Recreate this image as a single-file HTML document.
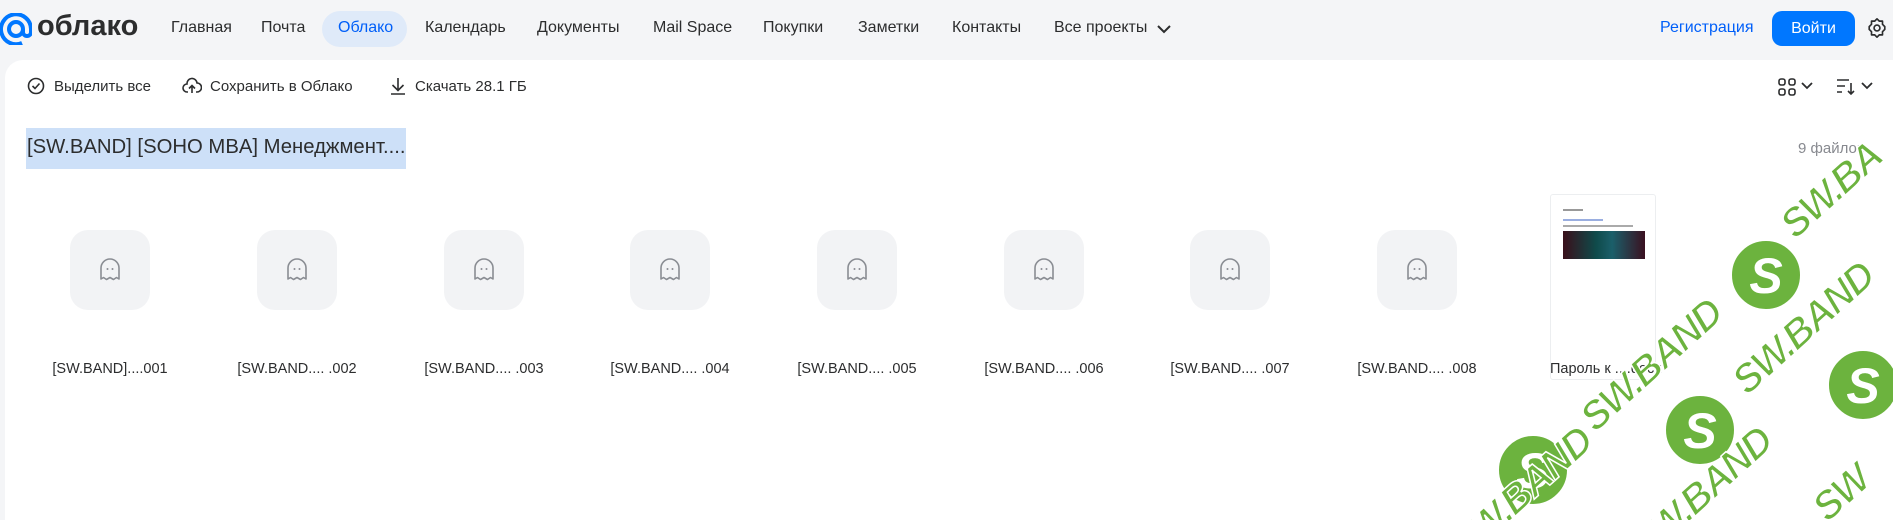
<!DOCTYPE html>
<html style="overflow:hidden;background:#fff"><head><meta charset="utf-8"><style>
*{margin:0;padding:0;box-sizing:border-box}
html,body{width:1893px;height:520px}
body{overflow:hidden;background:#f4f5f7;font-family:"Liberation Sans",Arial,sans-serif;color:#2c2d2e;position:relative}
.a{position:absolute;white-space:nowrap}
.nav{font-size:16px;top:19px;color:#2c2d2e}
.panel{position:absolute;left:5px;top:60px;width:1888px;height:460px;background:#fff;border-radius:18px 0 0 0}
.tb{font-size:15px;top:78px}
.tile{position:absolute;top:230px;width:80px;height:80px;background:#f2f3f5;border-radius:18px}
.tile svg{position:absolute;left:29px;top:28px}
.lbl{position:absolute;top:361px;font-size:14.5px;width:186px;text-align:center;color:#2c2d2e}
</style></head><body>
<svg class="a" style="left:0;top:13px" width="32" height="32" viewBox="0 0 32 32"><circle cx="16" cy="16" r="7" fill="none" stroke="#0077ff" stroke-width="4"/><path d="M23 16v3a4 4 0 0 0 8 0v-3A15 15 0 1 0 22 30" fill="none" stroke="#0077ff" stroke-width="4"/></svg>
<div class="a" style="left:37px;top:10px;font-size:29px;font-weight:bold;color:#2c2d2e">облако</div>
<div class="a" style="left:322px;top:11px;width:85px;height:36px;border-radius:18px;background:#dfeaf9"></div>
<div class="a nav" style="left:171px">Главная</div>
<div class="a nav" style="left:261px">Почта</div>
<div class="a nav" style="left:338px;color:#005ff9">Облако</div>
<div class="a nav" style="left:425px">Календарь</div>
<div class="a nav" style="left:537px">Документы</div>
<div class="a nav" style="left:653px">Mail Space</div>
<div class="a nav" style="left:763px">Покупки</div>
<div class="a nav" style="left:858px">Заметки</div>
<div class="a nav" style="left:952px">Контакты</div>
<div class="a nav" style="left:1054px">Все проекты</div>
<svg class="a" style="left:1156px;top:23px" width="16" height="12"><path d="M2 3l6 6 6-6" fill="none" stroke="#2c2d2e" stroke-width="2"/></svg>
<div class="a nav" style="left:1660px;color:#005ff9">Регистрация</div>
<div class="a" style="left:1772px;top:11px;width:83px;height:35px;border-radius:10px;background:#0077ff;color:#fff;font-size:16px;text-align:center;line-height:35px">Войти</div>
<svg class="a" style="left:1866px;top:17px" width="22" height="22" viewBox="0 0 24 24"><path d="M12 2l2.5 2.5h3.5v3.5L20.5 10.5 20.5 13.5 18 16v3.5h-3.5L12 22 9.5 19.5H6V16L3.5 13.5v-3L6 8V4.5h3.5z" fill="none" stroke="#2c2d2e" stroke-width="1.8" stroke-linejoin="round"/><circle cx="12" cy="12" r="3.2" fill="none" stroke="#2c2d2e" stroke-width="1.8"/></svg>
<div class="panel"></div>
<svg class="a" style="left:27px;top:77px" width="18" height="18"><circle cx="9" cy="9" r="7.5" fill="none" stroke="#2c2d2e" stroke-width="1.6"/><path d="M5.5 9l2.5 2.5 4.5-5" fill="none" stroke="#2c2d2e" stroke-width="1.6"/></svg>
<div class="a tb" style="left:54px">Выделить все</div>
<svg class="a" style="left:182px;top:76px" width="20" height="20" viewBox="0 0 20 20"><path d="M6 16H5a4 4 0 0 1 0-8 5 5 0 0 1 10-1 4 4 0 0 1 0 9h-1M10 17V10M7 12.5l3-3 3 3" fill="none" stroke="#2c2d2e" stroke-width="1.6"/></svg>
<div class="a tb" style="left:210px">Сохранить в Облако</div>
<svg class="a" style="left:389px;top:76px" width="18" height="20"><path d="M9 2v12M3.5 9l5.5 5.5 5.5-5.5M2 18h14" fill="none" stroke="#2c2d2e" stroke-width="1.6"/></svg>
<div class="a tb" style="left:415px">Скачать 28.1 ГБ</div>
<svg class="a" style="left:1778px;top:78px" width="18" height="18"><g fill="none" stroke="#2c2d2e" stroke-width="1.6"><rect x="1" y="1" width="6" height="6" rx="2"/><rect x="11" y="1" width="6" height="6" rx="2"/><rect x="1" y="11" width="6" height="6" rx="2"/><rect x="11" y="11" width="6" height="6" rx="2"/></g></svg>
<svg class="a" style="left:1800px;top:81px" width="14" height="10"><path d="M2 2l5 5 5-5" fill="none" stroke="#2c2d2e" stroke-width="1.8"/></svg>
<svg class="a" style="left:1836px;top:78px" width="20" height="18"><path d="M1 2h12M1 8h8M1 14h5M15 5v11M12 13l3 3 3-3" fill="none" stroke="#2c2d2e" stroke-width="1.6"/></svg>
<svg class="a" style="left:1860px;top:81px" width="14" height="10"><path d="M2 2l5 5 5-5" fill="none" stroke="#2c2d2e" stroke-width="1.8"/></svg>
<div class="a" style="left:26px;top:128px;width:380px;height:41px;background:#cde0f8"></div>
<div class="a" style="left:27px;top:136px;font-size:20.3px;color:#2c2d2e">[SW.BAND] [SOHO MBA] Менеджмент....</div>
<div class="a" style="left:1798px;top:140px;font-size:15px;color:#87898f">9 файлов</div>

<div class="tile" style="left:70px"><svg width="22" height="24" viewBox="0 0 22 24"><path d="M2 21V10a9 9 0 0 1 18 0v11l-2.5-1.5-3 2-3.5-2-3.5 2-3-2z" fill="none" stroke="#8a8d93" stroke-width="1.6" stroke-linejoin="round"/><circle cx="8.5" cy="11" r="1" fill="#8a8d93"/><circle cx="13.5" cy="11" r="1" fill="#8a8d93"/></svg></div>
<div class="tile" style="left:257px"><svg width="22" height="24" viewBox="0 0 22 24"><path d="M2 21V10a9 9 0 0 1 18 0v11l-2.5-1.5-3 2-3.5-2-3.5 2-3-2z" fill="none" stroke="#8a8d93" stroke-width="1.6" stroke-linejoin="round"/><circle cx="8.5" cy="11" r="1" fill="#8a8d93"/><circle cx="13.5" cy="11" r="1" fill="#8a8d93"/></svg></div>
<div class="tile" style="left:444px"><svg width="22" height="24" viewBox="0 0 22 24"><path d="M2 21V10a9 9 0 0 1 18 0v11l-2.5-1.5-3 2-3.5-2-3.5 2-3-2z" fill="none" stroke="#8a8d93" stroke-width="1.6" stroke-linejoin="round"/><circle cx="8.5" cy="11" r="1" fill="#8a8d93"/><circle cx="13.5" cy="11" r="1" fill="#8a8d93"/></svg></div>
<div class="tile" style="left:630px"><svg width="22" height="24" viewBox="0 0 22 24"><path d="M2 21V10a9 9 0 0 1 18 0v11l-2.5-1.5-3 2-3.5-2-3.5 2-3-2z" fill="none" stroke="#8a8d93" stroke-width="1.6" stroke-linejoin="round"/><circle cx="8.5" cy="11" r="1" fill="#8a8d93"/><circle cx="13.5" cy="11" r="1" fill="#8a8d93"/></svg></div>
<div class="tile" style="left:817px"><svg width="22" height="24" viewBox="0 0 22 24"><path d="M2 21V10a9 9 0 0 1 18 0v11l-2.5-1.5-3 2-3.5-2-3.5 2-3-2z" fill="none" stroke="#8a8d93" stroke-width="1.6" stroke-linejoin="round"/><circle cx="8.5" cy="11" r="1" fill="#8a8d93"/><circle cx="13.5" cy="11" r="1" fill="#8a8d93"/></svg></div>
<div class="tile" style="left:1004px"><svg width="22" height="24" viewBox="0 0 22 24"><path d="M2 21V10a9 9 0 0 1 18 0v11l-2.5-1.5-3 2-3.5-2-3.5 2-3-2z" fill="none" stroke="#8a8d93" stroke-width="1.6" stroke-linejoin="round"/><circle cx="8.5" cy="11" r="1" fill="#8a8d93"/><circle cx="13.5" cy="11" r="1" fill="#8a8d93"/></svg></div>
<div class="tile" style="left:1190px"><svg width="22" height="24" viewBox="0 0 22 24"><path d="M2 21V10a9 9 0 0 1 18 0v11l-2.5-1.5-3 2-3.5-2-3.5 2-3-2z" fill="none" stroke="#8a8d93" stroke-width="1.6" stroke-linejoin="round"/><circle cx="8.5" cy="11" r="1" fill="#8a8d93"/><circle cx="13.5" cy="11" r="1" fill="#8a8d93"/></svg></div>
<div class="tile" style="left:1377px"><svg width="22" height="24" viewBox="0 0 22 24"><path d="M2 21V10a9 9 0 0 1 18 0v11l-2.5-1.5-3 2-3.5-2-3.5 2-3-2z" fill="none" stroke="#8a8d93" stroke-width="1.6" stroke-linejoin="round"/><circle cx="8.5" cy="11" r="1" fill="#8a8d93"/><circle cx="13.5" cy="11" r="1" fill="#8a8d93"/></svg></div>

<div class="lbl" style="left:17px">[SW.BAND]....001</div>
<div class="lbl" style="left:204px">[SW.BAND.... .002</div>
<div class="lbl" style="left:391px">[SW.BAND.... .003</div>
<div class="lbl" style="left:577px">[SW.BAND.... .004</div>
<div class="lbl" style="left:764px">[SW.BAND.... .005</div>
<div class="lbl" style="left:951px">[SW.BAND.... .006</div>
<div class="lbl" style="left:1137px">[SW.BAND.... .007</div>
<div class="lbl" style="left:1324px">[SW.BAND.... .008</div>

<div class="a" style="left:1550px;top:194px;width:106px;height:186px;border:1px solid #eceef0;border-radius:3px;background:#fff">
<div class="a" style="left:12px;top:14px;width:20px;height:2px;background:#999"></div>
<div class="a" style="left:12px;top:24px;width:40px;height:2px;background:#9aaee0"></div>
<div class="a" style="left:12px;top:30px;width:70px;height:2px;background:#aaa"></div>
<div class="a" style="left:12px;top:36px;width:82px;height:28px;background:linear-gradient(90deg,#3a0f1a,#0f4a4a 40%,#1b5f6a 60%,#3a1020)"></div>
</div>
<div class="a" style="left:1550px;top:361px;font-size:14.5px">Пароль к ....docx</div>

<svg class="a" style="left:0;top:0" width="1893" height="520" viewBox="0 0 1893 520">
<g fill="#6cb33e" stroke="#fff" stroke-width="2">
<circle cx="1766" cy="275" r="35"/><circle cx="1700" cy="430" r="35"/><circle cx="1533" cy="470" r="35"/><circle cx="1863" cy="385" r="35"/>
</g>
<g font-family="Liberation Sans" font-weight="bold" font-style="italic" font-size="50" fill="#fff" text-anchor="middle">
<text x="1766" y="293">S</text><text x="1700" y="448">S</text><text x="1533" y="488">S</text><text x="1863" y="403">S</text>
</g>
<g font-family="Liberation Sans" font-weight="900" font-style="italic" font-size="40" fill="#6cb33e" stroke="#fff" stroke-width="1.5" text-anchor="middle" letter-spacing="-2">
<text transform="translate(1840,200) rotate(-42)">SW.BA</text>
<text transform="translate(1660,375) rotate(-42)">SW.BAND</text>
<text transform="translate(1812,338) rotate(-42)">SW.BAND</text>
<text transform="translate(1530,503) rotate(-42)">SW.BAND</text>
<text transform="translate(1710,503) rotate(-42)">SW.BAND</text>
<text transform="translate(1850,503) rotate(-42)">SW</text>
</g>
</svg>
</body></html>
